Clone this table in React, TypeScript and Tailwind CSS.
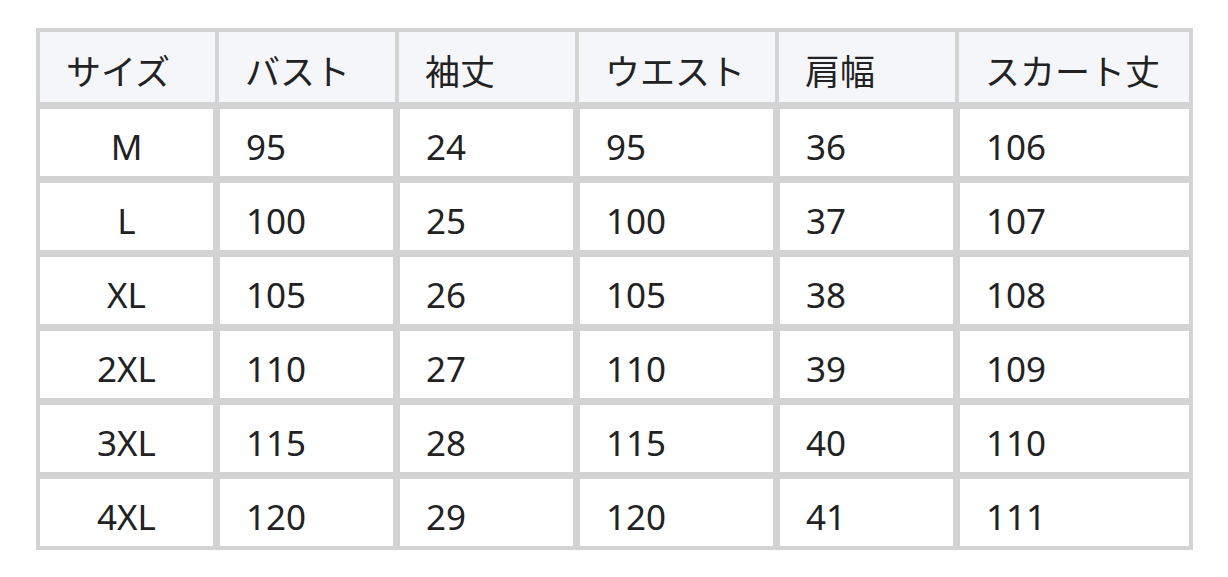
import React from 'react';

const headers = ['サイズ', 'バスト', '袖丈', 'ウエスト', '肩幅', 'スカート丈'];

const rows = [
  ['M', '95', '24', '95', '36', '106'],
  ['L', '100', '25', '100', '37', '107'],
  ['XL', '105', '26', '105', '38', '108'],
  ['2XL', '110', '27', '110', '39', '109'],
  ['3XL', '115', '28', '115', '40', '110'],
  ['4XL', '120', '29', '120', '41', '111'],
];

export default function App() {
  return (
    <div
      className="min-h-[577px] w-[1228px] bg-white pt-[28px] pl-[36px] text-[35px] text-[#222]"
      style={{ fontFamily: '"Noto Sans", "Noto Sans CJK JP", sans-serif' }}
    >
      <div className="w-[1157px] bg-[#d3d3d3] p-[4px]">
        <div className="grid h-[70px] grid-cols-[175px_176px_176px_196px_176px_230px] gap-x-[4px]">
          {headers.map(h => (
            <div key={h} className="flex items-center bg-[#f5f6fa] pl-[26px] pt-[8px] leading-none">
              {h}
            </div>
          ))}
        </div>
        <div className="mt-[7px] grid grid-cols-[173px_173px_173px_193px_173px_229px] auto-rows-[67px] gap-[7px]">
          {rows.map(r =>
            r.map((v, i) => (
              <div
                key={r[0] + i}
                className={`flex items-center bg-white pt-[8px] leading-none ${i === 0 ? 'justify-center' : 'pl-[26px]'}`}
              >
                {v}
              </div>
            ))
          )}
        </div>
      </div>
    </div>
  );
}
